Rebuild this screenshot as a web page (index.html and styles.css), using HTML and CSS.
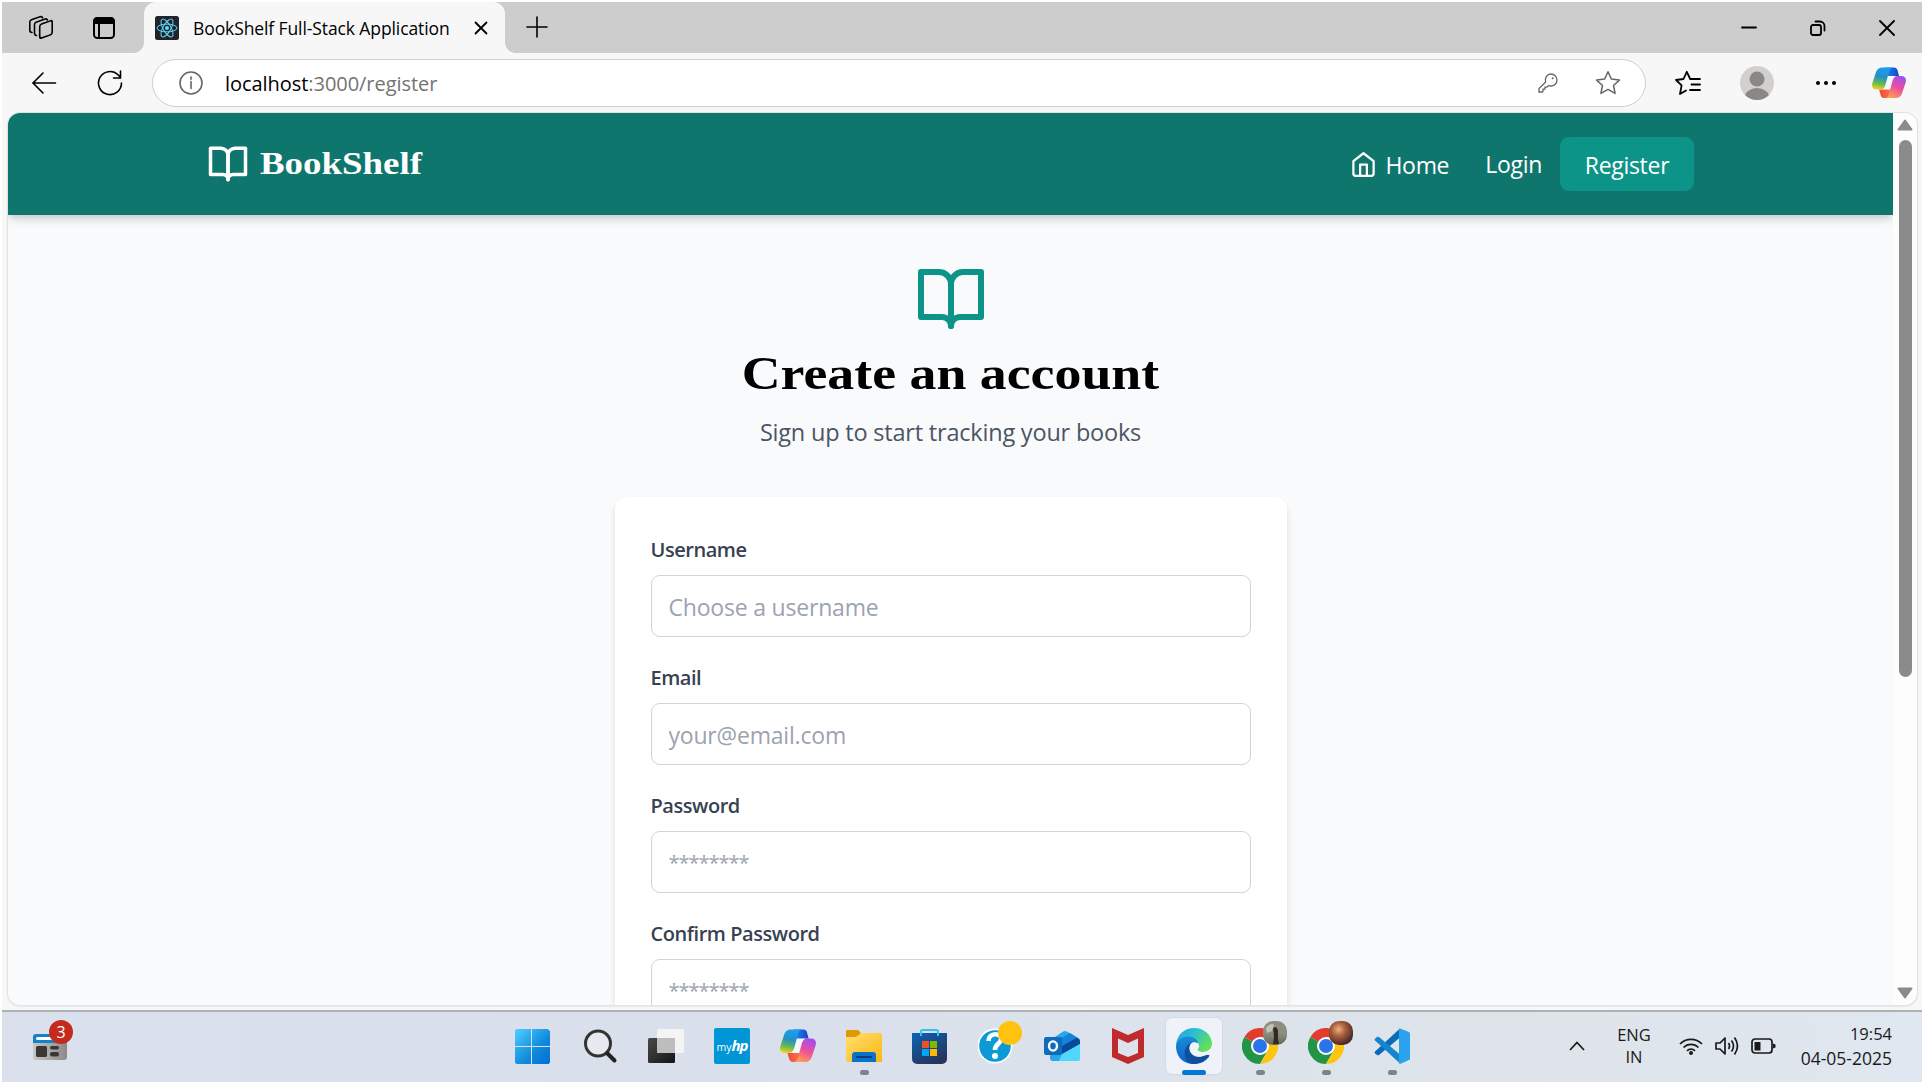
FILE: index.html
```html
<!DOCTYPE html>
<html lang="en">
<head>
<meta charset="utf-8">
<title>BookShelf Full-Stack Application</title>
<link rel="stylesheet" href="styles.css">
</head>
<body>
<svg class="defs" width="0" height="0" aria-hidden="true">
  <defs>
    <linearGradient id="cpTop" x1="0" y1="0" x2="1" y2="0"><stop offset="0" stop-color="#1f8fec"/><stop offset=".6" stop-color="#1a5fdc"/><stop offset="1" stop-color="#1b3fc4"/></linearGradient>
    <linearGradient id="cpLeft" x1=".4" y1="0" x2=".2" y2="1"><stop offset="0" stop-color="#1d9df0"/><stop offset=".4" stop-color="#2590c8"/><stop offset=".7" stop-color="#5fba55"/><stop offset="1" stop-color="#ffd21c"/></linearGradient>
    <linearGradient id="cpRight" x1=".7" y1="0" x2=".3" y2="1"><stop offset="0" stop-color="#a24df0"/><stop offset=".5" stop-color="#ea4f9c"/><stop offset="1" stop-color="#ffa04f"/></linearGradient>
    <linearGradient id="cpBot" x1="0" y1="0" x2="1" y2="0"><stop offset="0" stop-color="#ef4a3c"/><stop offset="1" stop-color="#ff7a45"/></linearGradient>
    <linearGradient id="win" x1="0" y1="0" x2="1" y2="1"><stop offset="0" stop-color="#4fd0ff"/><stop offset=".6" stop-color="#1089dc"/><stop offset="1" stop-color="#0070d2"/></linearGradient>
    <linearGradient id="dark" x1="0" y1="0" x2="1" y2="1"><stop offset="0" stop-color="#4a4a4a"/><stop offset="1" stop-color="#151515"/></linearGradient>
    <linearGradient id="folder" x1="0" y1="0" x2="1" y2="1"><stop offset="0" stop-color="#ffdf70"/><stop offset="1" stop-color="#fbb812"/></linearGradient>
    <linearGradient id="store" x1="0" y1="0" x2=".6" y2="1"><stop offset="0" stop-color="#0b62b4"/><stop offset="1" stop-color="#25365c"/></linearGradient>
    <linearGradient id="edgeTop" x1="0" y1="0" x2="1" y2=".5"><stop offset="0" stop-color="#1f9fe0"/><stop offset=".5" stop-color="#2cc0d2"/><stop offset="1" stop-color="#62e05a"/></linearGradient>
    <linearGradient id="edgeMid" x1="0" y1="0" x2="0" y2="1"><stop offset="0" stop-color="#1b8bd8"/><stop offset="1" stop-color="#0b63c4"/></linearGradient>
    <linearGradient id="photo1" x1="0" y1="0" x2="0" y2="1"><stop offset="0" stop-color="#8f8d80"/><stop offset=".5" stop-color="#8b9080"/><stop offset="1" stop-color="#6d655a"/></linearGradient>
    <radialGradient id="photo2" cx=".4" cy=".35" r=".7"><stop offset="0" stop-color="#f0b088"/><stop offset=".4" stop-color="#a9613c"/><stop offset="1" stop-color="#3c2224"/></radialGradient>
    <symbol id="copilot" viewBox="0 0 36 36">
      <path d="M17 10h9L19 26h-9z" fill="#f6f8fc"/>
      <path d="M14 1.500h9.200c2.200 0 3.200 1.200 3.800 3L28.600 10.500H16z" fill="url(#cpTop)"/>
      <path d="M22 34H13c-2.200 0-3.200-1.200-3.800-3L7.500 25H20z" fill="url(#cpBot)"/>
      <path d="M11.500 1.500H22c-2.300.3-3.200 2-4 4.700L14.600 18.500c-1.300 4.700-2.600 6.500-6.100 6.500H5C.9 25-.8 22 .4 18L3.900 7.500C5.200 3.300 7.300 1.500 11.500 1.500z" fill="url(#cpLeft)"/>
      <path d="M24.500 34H14c2.300-.3 3.200-2 4-4.700L21.400 17c1.300-4.700 2.600-6.500 6.100-6.500H31c4.100 0 5.800 3 4.600 7L32.100 28c-1.300 4.200-3.400 6-7.600 6z" fill="url(#cpRight)"/>
    </symbol>
    <symbol id="book" viewBox="0 0 24 24">
      <path d="M2 3h6a4 4 0 0 1 4 4v14a3 3 0 0 0-3-3H2z"/><path d="M22 3h-6a4 4 0 0 0-4 4v14a3 3 0 0 1 3-3h7z"/>
    </symbol>
    <symbol id="chrome" viewBox="0 0 36 36">
      <circle cx="18" cy="18" r="17" fill="#fff"/>
      <path d="M18 18L2.400 9A18 18 0 0 1 33.600 9z" fill="#e33b2e"/>
      <path d="M18 18L2.400 9A18 18 0 0 0 18 36L25.800 22.500z" fill="#229446"/>
      <path d="M18 9H33.600A18 18 0 0 1 18 36L25.800 22.500z" fill="#fdc60c"/>
      <circle cx="18" cy="18" r="9" fill="#fff"/><circle cx="18" cy="18" r="7" fill="#2b73e8"/>
    </symbol>
  </defs>
</svg>
<div class="screen">
  <header class="titlebar">
    <svg class="ic workspaces" width="26" height="26" viewBox="0 0 26 26"><rect x="0" y="0" width="12.500" height="14" rx="2.200" transform="translate(11.700 9.700) skewY(-20)"/><path d="M8.500 20.500c-1.500-.2-2-1-2-2.200V9.500c0-1.200.5-1.800 1.600-2.200l9-3.300c1-.4 1.900 0 2.300.9M4 17.500c-1.600-.2-2.200-1-2.200-2.300V7c0-1.200.5-1.800 1.600-2.200l8.600-3c1.200-.4 2.200 0 2.600 1"/></svg>
    <svg class="ic vtabs" width="22" height="22" viewBox="0 0 22 22"><rect x="1" y="1" width="20" height="20" rx="3.500"/><path d="M1 6V4.500A3.500 3.500 0 0 1 4.500 1h13A3.500 3.500 0 0 1 21 4.500V6z" fill="#000"/><path d="M6 6v15"/></svg>
    <div class="tab">
      <svg width="24" height="24" viewBox="0 0 24 24"><rect width="24" height="24" rx="2.500" fill="#20232a"/><g fill="none" stroke="#61dafb" stroke-width="1"><ellipse cx="12" cy="12" rx="10" ry="3.900"/><ellipse cx="12" cy="12" rx="10" ry="3.900" transform="rotate(60 12 12)"/><ellipse cx="12" cy="12" rx="10" ry="3.900" transform="rotate(120 12 12)"/></g><circle cx="12" cy="12" r="2" fill="#61dafb"/></svg>
      <span class="tab-title">BookShelf Full-Stack Application</span>
      <svg class="ic tab-x" width="14" height="14" viewBox="0 0 14 14"><path d="M1.500 1.500l11 11M12.500 1.500l-11 11" stroke-width="1.800"/></svg>
    </div>
    <svg class="ic plus" width="22" height="22" viewBox="0 0 22 22"><path d="M11 1v20M1 11h20"/></svg>
    <div class="winctl">
      <svg class="ic" width="16" height="16" viewBox="0 0 16 16"><path d="M1 7.500h14" stroke-width="1.800"/></svg>
      <svg class="ic" width="16" height="16" viewBox="0 0 16 16"><rect x="1" y="5" width="10" height="10" rx="2" stroke-width="1.800"/><path d="M5.500 1.500h4.500A4.500 4.500 0 0 1 14.500 6v4.500" stroke-width="1.800"/></svg>
      <svg class="ic" width="16" height="16" viewBox="0 0 16 16"><path d="M1 1l14 14M15 1L1 15" stroke-width="1.800"/></svg>
    </div>
  </header>
  <div class="toolbar">
    <svg class="ic back" width="26" height="24" viewBox="0 0 26 24"><path d="M24.500 12H2M12 2L2 12l10 10"/></svg>
    <svg class="ic reload" width="26" height="26" viewBox="0 0 26 26"><path d="M24.500 13A11.500 11.500 0 1 1 21 4.800L23.500 7.500M23.500 1v7h-7"/></svg>
    <div class="omnibox">
      <svg class="ic grey" width="24" height="24" viewBox="0 0 24 24"><circle cx="12" cy="12" r="11"/><path d="M12 10.500v7M12 6v2.300"/></svg>
      <span class="url">localhost<i>:3000/register</i></span>
      <svg class="ic grey key" width="20" height="20" viewBox="0 0 20 20"><path d="M13 1a6 6 0 0 1 0 12c-1 0-1.800-.1-2.500-.5L9 14.200H7v2H5v2L4.300 19H1v-3.500l6.500-6.300C6.700 4.500 9 1 13 1z" stroke-width="1.300"/><circle cx="14.700" cy="5.300" r="1" fill="#666" stroke="none"/></svg>
      <svg class="ic grey star" width="26" height="26" viewBox="0 0 26 26"><path d="M13 1.800l3.400 7.300 8 1-5.900 5.400 1.600 7.900-7.100-4-7.100 4 1.600-7.900L1.600 10.100l8-1z" stroke-width="1.500" stroke-linejoin="round"/></svg>
    </div>
    <svg class="ic fav" width="26" height="26" viewBox="0 0 26 26"><path d="M15.500 9h-.3L11.800 1.800 8.500 9 1 10l5.600 5.300L5 24l6-3.500M15.500 9H25M16.500 14.500H25M15 20h10" stroke-width="1.800" stroke-linejoin="round"/></svg>
    <svg class="avatar" width="34" height="34" viewBox="0 0 34 34"><clipPath id="av"><circle cx="17" cy="17" r="17"/></clipPath><g clip-path="url(#av)"><rect width="34" height="34" fill="#d2d0ce"/><circle cx="17" cy="13" r="7.500" fill="#8a8886"/><ellipse cx="17" cy="32" rx="12.500" ry="10" fill="#8a8886"/></g></svg>
    <svg class="dots" width="22" height="6" viewBox="0 0 22 6"><circle cx="3" cy="3" r="2"/><circle cx="11" cy="3" r="2"/><circle cx="19" cy="3" r="2"/></svg>
    <svg class="cp" width="34" height="34"><use href="#copilot"/></svg>
  </div>
  <div class="viewport">
    <div class="page">
      <nav class="nav">
        <div class="brand"><svg class="lucide" width="42" height="42"><use href="#book"/></svg><span class="wordmark">BookShelf</span></div>
        <div class="links">
          <a class="home"><svg class="lucide" width="27" height="27" viewBox="0 0 24 24"><path d="m3 9 9-7 9 7v11a2 2 0 0 1-2 2H5a2 2 0 0 1-2-2z"/><path d="M9 22V12h6v10"/></svg><span>Home</span></a>
          <a class="login"><span>Login</span></a>
          <a class="register"><span>Register</span></a>
        </div>
      </nav>
      <main class="main">
        <svg class="lucide hero" width="72" height="72"><use href="#book"/></svg>
        <h1>Create an account</h1>
        <p class="sub">Sign up to start tracking your books</p>
        <form class="card">
          <label>Username</label><input type="text" placeholder="Choose a username">
          <label>Email</label><input type="text" placeholder="your@email.com">
          <label>Password</label><input class="pw" type="text" placeholder="********">
          <label>Confirm Password</label><input class="pw" type="text" placeholder="********">
        </form>
      </main>
    </div>
    <div class="scroll">
      <svg width="16" height="12" viewBox="0 0 16 12"><path d="M8 1.500L14.500 10.500H1.500z" fill="#8b8b8b" stroke="#8b8b8b" stroke-width="2" stroke-linejoin="round"/></svg>
      <div class="thumb"></div>
      <svg class="down" width="16" height="12" viewBox="0 0 16 12"><path d="M8 10.500L14.500 1.500H1.500z" fill="#8b8b8b" stroke="#8b8b8b" stroke-width="2" stroke-linejoin="round"/></svg>
    </div>
  </div>
  <footer class="taskbar">
    <div class="widgets">
      <svg width="34" height="26" viewBox="0 0 34 26"><defs><linearGradient id="wg"><stop offset="0" stop-color="#c9c7c5"/><stop offset="1" stop-color="#8c8a88"/></linearGradient></defs><path d="M0 9V3a3 3 0 0 1 3-3h31v12z" fill="#1183c8"/><path d="M0 9h34v14a3 3 0 0 1-3 3H3a3 3 0 0 1-3-3z" fill="url(#wg)"/><rect x="3" y="3" width="20" height="3" rx="1.500" fill="#fff"/><rect x="3" y="12" width="11" height="11" rx="1.500" fill="#393835"/><rect x="17" y="12" width="9" height="3.500" rx="1.700" fill="#393835"/><rect x="17" y="18" width="9" height="4.500" rx="2" fill="#393835"/></svg>
      <span class="badge">3</span>
    </div>
    <div class="apps">
      <div class="app start"><svg viewBox="0 0 36 36"><path d="M2.500 1H17v17H1V2.500zM18 1h15.500L36 3v15H18zM1 19h16v17H2.500L1 34.500zM18 19h18v15.500L34.500 36H18z" fill="url(#win)"/></svg></div>
      <div class="app"><svg viewBox="0 0 36 36"><circle cx="16" cy="15.500" r="12.500" fill="#e6eaf0" stroke="#333" stroke-width="3"/><path d="M25.500 25.500l7 7" stroke="#222" stroke-width="4" stroke-linecap="round"/></svg></div>
      <div class="app"><svg viewBox="0 0 36 36"><rect y="10" width="27" height="25" rx="1.500" fill="url(#dark)"/><rect x="9" y="1" width="27" height="24" rx="1.500" fill="#f4f4f4"/><path d="M9 10h18v15H10.500L9 23.500z" fill="#bdbdbd"/></svg></div>
      <div class="app hp"><span>my<b>hp</b></span></div>
      <div class="app"><svg><use href="#copilot"/></svg></div>
      <div class="app run"><svg viewBox="0 0 36 36"><path d="M0 3.500A1.500 1.500 0 0 1 1.500 2H12l3.500 3.500L12 9H0z" fill="#dd9a05"/><path d="M0 9h10l5-4h19.500L36 6.500V34H1.500L0 32.500z" fill="url(#folder)"/><path d="M6 34v-7a3 3 0 0 1 3-3h18a3 3 0 0 1 3 3v7z" fill="#0a72c9"/><path d="M11 29h14" stroke="#093f80" stroke-width="2" stroke-linecap="round"/></svg></div>
      <div class="app"><svg viewBox="0 0 36 36"><path d="M0 5h35v26a5 5 0 0 1-5 5H5a5 5 0 0 1-5-5z" fill="url(#store)"/><path d="M9 8V3.500A1.500 1.500 0 0 1 10.500 2h14A1.500 1.500 0 0 1 26 3.500V8" fill="none" stroke="#2fc3f5" stroke-width="2"/><path d="M10 13h7v7h-7z" fill="#f25022"/><path d="M18 13h7v7h-7z" fill="#7fba00"/><path d="M10 21h7v7h-7z" fill="#00a4ef"/><path d="M18 21h7v7h-7z" fill="#ffb900"/></svg></div>
      <div class="app"><svg viewBox="0 0 36 36"><circle cx="17" cy="18" r="17.500" fill="#fff"/><circle cx="17" cy="18" r="15.800" fill="#0b99d8"/><path d="M10.500 13c0-9 13.500-8.500 12.500-1.500-.6 4.500-6 4.500-6 10.500" fill="none" stroke="#fff" stroke-width="4.600"/><circle cx="17" cy="28" r="3" fill="#fff"/></svg><span class="ydot"></span></div>
      <div class="app"><svg viewBox="0 0 36 36"><path d="M6 14q0-2 2-3L19 3.500q2-1 4 0L34 10q2 1 2 3v17a3 3 0 0 1-3 3H9a3 3 0 0 1-3-3z" fill="#28a8e8"/><path d="M12 13L26 5l7 4.500L18 19z" fill="#1583dc"/><path d="M18 18L33 9.500q3 1.500 3 3.500v3L18 27z" fill="#0a4a9c"/><path d="M18 26l18-10v14a3 3 0 0 1-3 3H15z" fill="#4fd8fb"/><rect y="9" width="18" height="18" rx="2" fill="#0f6cbd"/><ellipse cx="9" cy="18" rx="4" ry="4.600" fill="none" stroke="#fff" stroke-width="2.400"/></svg></div>
      <div class="app"><svg viewBox="0 0 36 36"><path d="M2 0l16 7 16-7v29l-16 7-16-7z" fill="#c02a2c"/><path d="M8 10.500l10 4.500 10-4.500V25l-10 4-10-4z" fill="#dde3ee"/></svg></div>
      <div class="app active"><svg viewBox="0 0 36 36"><path d="M0 17C1 6 9 0 18 0c11 0 18 8 18 15.500 0 5-4 8.500-9 8.500-4.500 0-6-1.700-5-3.200 2-3 1-8.300-5-8.300C9 12.500 2 15 0 17z" fill="url(#edgeTop)"/><path d="M0 18C1 12 6 8.500 12 8.500c7 0 11 4.500 10.500 8.500-1.500-4-9-4.500-9 3.500 0 7 7 13 15 9.500C24 36 16 36.500 13 35.500 5 33.500 0 27 0 18z" fill="url(#edgeMid)"/><path d="M17 13.800c-3 .9-4.200 4-3.700 7 .8 6 7.200 9.700 13.700 7.200 2-.8 4-1.600 5.500-1.200 1 .3 1 1.200.3 2.200C29 34 23 36.500 17 36c-6-1-8.500-6.500-8.300-11 .2-5 3.500-10 8.300-11.200z" fill="#104f9e"/><path d="M22 15c1.500 2.500 1 4.500 0 5.800-1 1.500.5 3.200 5 3.200 3 0 5.500-1 7-3l2 4-3.500 1.800c-1.500-.4-3.500.4-5.500 1.200-6 2-12-1-13.300-6-.8-4 1.800-8 8.300-7z" fill="#f0f3f9"/></svg></div>
      <div class="app run"><svg><use href="#chrome"/></svg><svg class="photo" viewBox="0 0 24 24"><rect width="24" height="24" rx="10" fill="url(#photo1)"/><path d="M3 7q5-6 8-3l-2 6-5 2z" fill="#c2c2b8"/><path d="M10 7l3-1 2 3v9l1 5h-6l1-7z" fill="#332a28"/></svg></div>
      <div class="app run"><svg><use href="#chrome"/></svg><svg class="photo" viewBox="0 0 24 24"><rect width="24" height="24" rx="10" fill="url(#photo2)"/></svg></div>
      <div class="app run"><svg viewBox="0 0 36 36"><path d="M1 23.500l25-23v9L5 27q-1 .7-2 0l-2-1.800q-.8-.8 0-1.700z" fill="#0a6cb8"/><path d="M1 12.500l25 23v-9L5 9q-1-.7-2 0l-2 1.800q-.8.800 0 1.700z" fill="#1486cf"/><path d="M26 .500l9 3.500q1 .6 1 1.500v25q0 1-1 1.500l-9 4q-1-.3-1-1V1.500q0-1 1-1z" fill="#2aa3ef"/></svg></div>
    </div>
    <div class="tray">
      <svg class="chev" width="16" height="10" viewBox="0 0 16 10"><path d="M1 9l7-7.500L15 9"/></svg>
      <div class="lang"><span>ENG</span><span>IN</span></div>
      <svg class="wifi" width="24" height="18" viewBox="0 0 24 18"><path d="M1 7a15.500 15.500 0 0 1 22 0M4.500 10.500a10.600 10.600 0 0 1 15 0M8 13.800a5.700 5.700 0 0 1 8 0"/><circle cx="12" cy="16" r="2" fill="#1a1a1a" stroke="none"/></svg>
      <svg class="vol" width="24" height="20" viewBox="0 0 24 20"><path d="M1 7h4l5-5v16l-5-5H1zM13.500 7q2 3 0 6M16.500 4.500q4 5.500 0 11M19.500 1.500q6 8.500 0 17" stroke-linejoin="round"/></svg>
      <svg class="bat" width="25" height="16" viewBox="0 0 25 16"><rect x="1" y="1" width="20" height="14" rx="3"/><rect x="3.500" y="4" width="6" height="8.500" fill="#1a1a1a" stroke="none"/><path d="M22 5.500l2.500 1v3l-2.500 1z" fill="#1a1a1a" stroke="none"/></svg>
      <div class="clock"><span>19:54</span><span class="date">04-05-2025</span></div>
    </div>
  </footer>
</div>
</body>
</html>
```
FILE: styles.css
```css
* { box-sizing: border-box; }
body { margin: 0; background: #fff; font-family: "Open Sans", "Noto Sans", sans-serif; color: #000; overflow: hidden; }
svg { display: block; flex: none; }
span { white-space: nowrap; }
.defs { position: absolute; }
.screen { width: 1924px; height: 1084px; border: 2px solid #fff; background: #f7f7f7; display: flex; flex-direction: column; }
.ic { fill: none; stroke: #000; stroke-width: 1.6; stroke-linecap: round; }
.ic.grey { stroke: #666; }

.titlebar { height: 51px; background: #cdcdcd; display: flex; align-items: center; padding-left: 26px; flex: none; }
.vtabs { margin-left: 39px; stroke-width: 2; }
.tab { position: relative; align-self: stretch; width: 361px; margin-left: 29px; padding-left: 11px; background: #f7f7f7; border-radius: 12px 12px 0 0; display: flex; align-items: center; }
.tab::before, .tab::after { content: ""; position: absolute; bottom: 0; width: 10px; height: 10px; }
.tab::before { left: -10px; background: radial-gradient(circle at 0 0, transparent 9.500px, #f7f7f7 10px); }
.tab::after { right: -10px; background: radial-gradient(circle at 100% 0, transparent 9.500px, #f7f7f7 10px); }
.tab-title { margin-left: 14px; width: 280px; font-size: 17.500px; letter-spacing: -.1px; }
.tab-x { margin-left: 1px; }
.plus { margin-left: 21px; margin-top: -1px; }
.winctl { margin-left: auto; display: flex; gap: 53px; padding-right: 27px; }

.toolbar { height: 60px; background: #f7f7f7; display: flex; align-items: center; padding-left: 29px; flex: none; }
.reload { margin-left: 40px; }
.omnibox { width: 1494px; height: 48px; margin-left: 29px; border: 1.500px solid #cfcfcf; border-radius: 24px; background: #fff; display: flex; align-items: center; padding-left: 26px; }
.url { margin-left: 22px; width: 1313px; font-size: 20px; letter-spacing: -.05px; }
.url i { font-style: normal; color: #737373; }
.star { margin-left: 37px; }
.fav { margin-left: 29px; }
.avatar { margin-left: 39px; }
.dots { margin-left: 41px; }
.cp { margin-left: 35px; }

.viewport { height: 892px; margin: 0 5px 5px 6px; border-radius: 12px; display: flex; overflow: hidden; flex: none; box-shadow: 0 0 0 1px #e2e2e2, 0 1px 2px #ccc; }
.page { width: 1885px; background: #f9fafc; overflow: hidden; }
.nav { position: relative; height: 102px; padding: 0 199px; background: #0f766e; display: flex; justify-content: space-between; align-items: center; box-shadow: 0 6px 9px -1px rgba(0,0,0,.13), 0 3px 6px -2px rgba(0,0,0,.1); }
.lucide { fill: none; stroke: currentColor; stroke-width: 2; stroke-linecap: round; stroke-linejoin: round; }
.brand { display: flex; align-items: center; gap: 11px; color: #fff; }
.wordmark { font: bold 31px "Liberation Serif", serif; transform: scaleX(1.19); transform-origin: left; }
.links { display: flex; align-items: center; color: #fff; font-size: 23px; letter-spacing: -.3px; }
.links span { padding-top: 2px; }
.home { display: flex; align-items: center; gap: 8px; }
.login { margin-left: 36px; }
.register { width: 134px; height: 54px; margin-left: 18px; border-radius: 9px; background: #0d9488; display: flex; justify-content: center; align-items: center; }
.main { padding-top: 48px; display: flex; flex-direction: column; align-items: center; }
.hero { color: #0d9488; }
h1 { margin: 12px 0 0; font: bold 46px/54px "Liberation Serif", serif; transform: scaleX(1.17); }
.sub { margin: 13px 0 0; font-size: 23.500px; letter-spacing: -.2px; line-height: 36px; color: #4b5563; }
.card { width: 672px; margin-top: 47px; padding: 36px; background: #fff; border-radius: 12px; box-shadow: 0 6px 9px -1px rgba(0,0,0,.1), 0 3px 6px -2px rgba(0,0,0,.1); display: flex; flex-direction: column; }
label { height: 30px; line-height: 33px; margin-bottom: 12px; font-size: 20px; letter-spacing: -.45px; font-weight: 600; color: #374151; }
input { height: 62px; margin: 0 0 24px; padding: 2px 17px 0; border: 1.500px solid #d1d5db; border-radius: 9px; font: 23px "Open Sans", sans-serif; letter-spacing: -.2px; }
.pw { padding-top: 0; font-size: 20px; letter-spacing: -1px; }
input::placeholder { color: #9ca3af; opacity: 1; }

.scroll { flex: 1; background: #fdfdfd; display: flex; flex-direction: column; align-items: center; padding: 6px 0 6px; }
.thumb { width: 13px; height: 537px; margin-top: 9px; border-radius: 7px; background: #8b8b8b; }
.down { margin-top: auto; }

.taskbar { height: 72px; border-top: 2px solid #adb2b9; background: linear-gradient(90deg, #dbe1ec, #d9dfeb 35%, #dce3ec 60%, #dfe4ea 80%, #dfe7f0); display: flex; flex: none; }
.widgets { position: relative; width: 499px; padding: 22px 0 0 31px; }
.badge { position: absolute; left: 47px; top: 8px; width: 24px; height: 24px; border-radius: 50%; background: #c42b1c; color: #fff; font-size: 16px; line-height: 24px; text-align: center; }
.apps { display: flex; }
.app { position: relative; width: 66px; height: 70px; padding: 16px 15px; }
.app.start { padding-left: 13px; }
.app > svg { width: 36px; height: 36px; }
.app.run::after, .app.active::after { content: ""; position: absolute; left: 29px; top: 58px; width: 9px; height: 5px; border-radius: 3px; background: #7e838a; }
.app.active::after { left: 21px; width: 24px; background: #0078d4; }
.app.active::before { content: ""; position: absolute; left: 5px; top: 6px; width: 56px; height: 56px; border-radius: 6px; background: #eff3f9; box-shadow: 0 0 0 1px #d5dbe4, 0 1px 1px #c4cad4; }
.app.active > svg { position: relative; }
.hp span { display: block; width: 36px; height: 36px; border-radius: 2px; background: #0096d6; color: #fff; font-size: 10.500px; line-height: 35px; text-align: center; }
.hp b { font-size: 15px; font-style: italic; letter-spacing: -1px; }
.ydot { position: absolute; left: 35px; top: 9px; width: 24px; height: 24px; border-radius: 50%; background: #ffc20e; }
.app > .photo { position: absolute; left: 36px; top: 9px; width: 24px; height: 24px; }
.tray { margin-left: auto; display: flex; align-items: center; padding: 0 30px 3px 0; font-size: 16.500px; line-height: 24px; color: #1a1a1a; }
.tray svg { fill: none; stroke: #1a1a1a; stroke-width: 1.700; }
.lang { margin-left: 32px; width: 34px; display: flex; flex-direction: column; align-items: center; line-height: 22px; }
.wifi { margin-left: 28px; }
.vol { margin-left: 12px; }
.bat { margin-left: 12px; }
.clock { width: 92px; margin-left: 24px; display: flex; flex-direction: column; align-items: flex-end; }
.date { font-size: 17.500px; }
```
